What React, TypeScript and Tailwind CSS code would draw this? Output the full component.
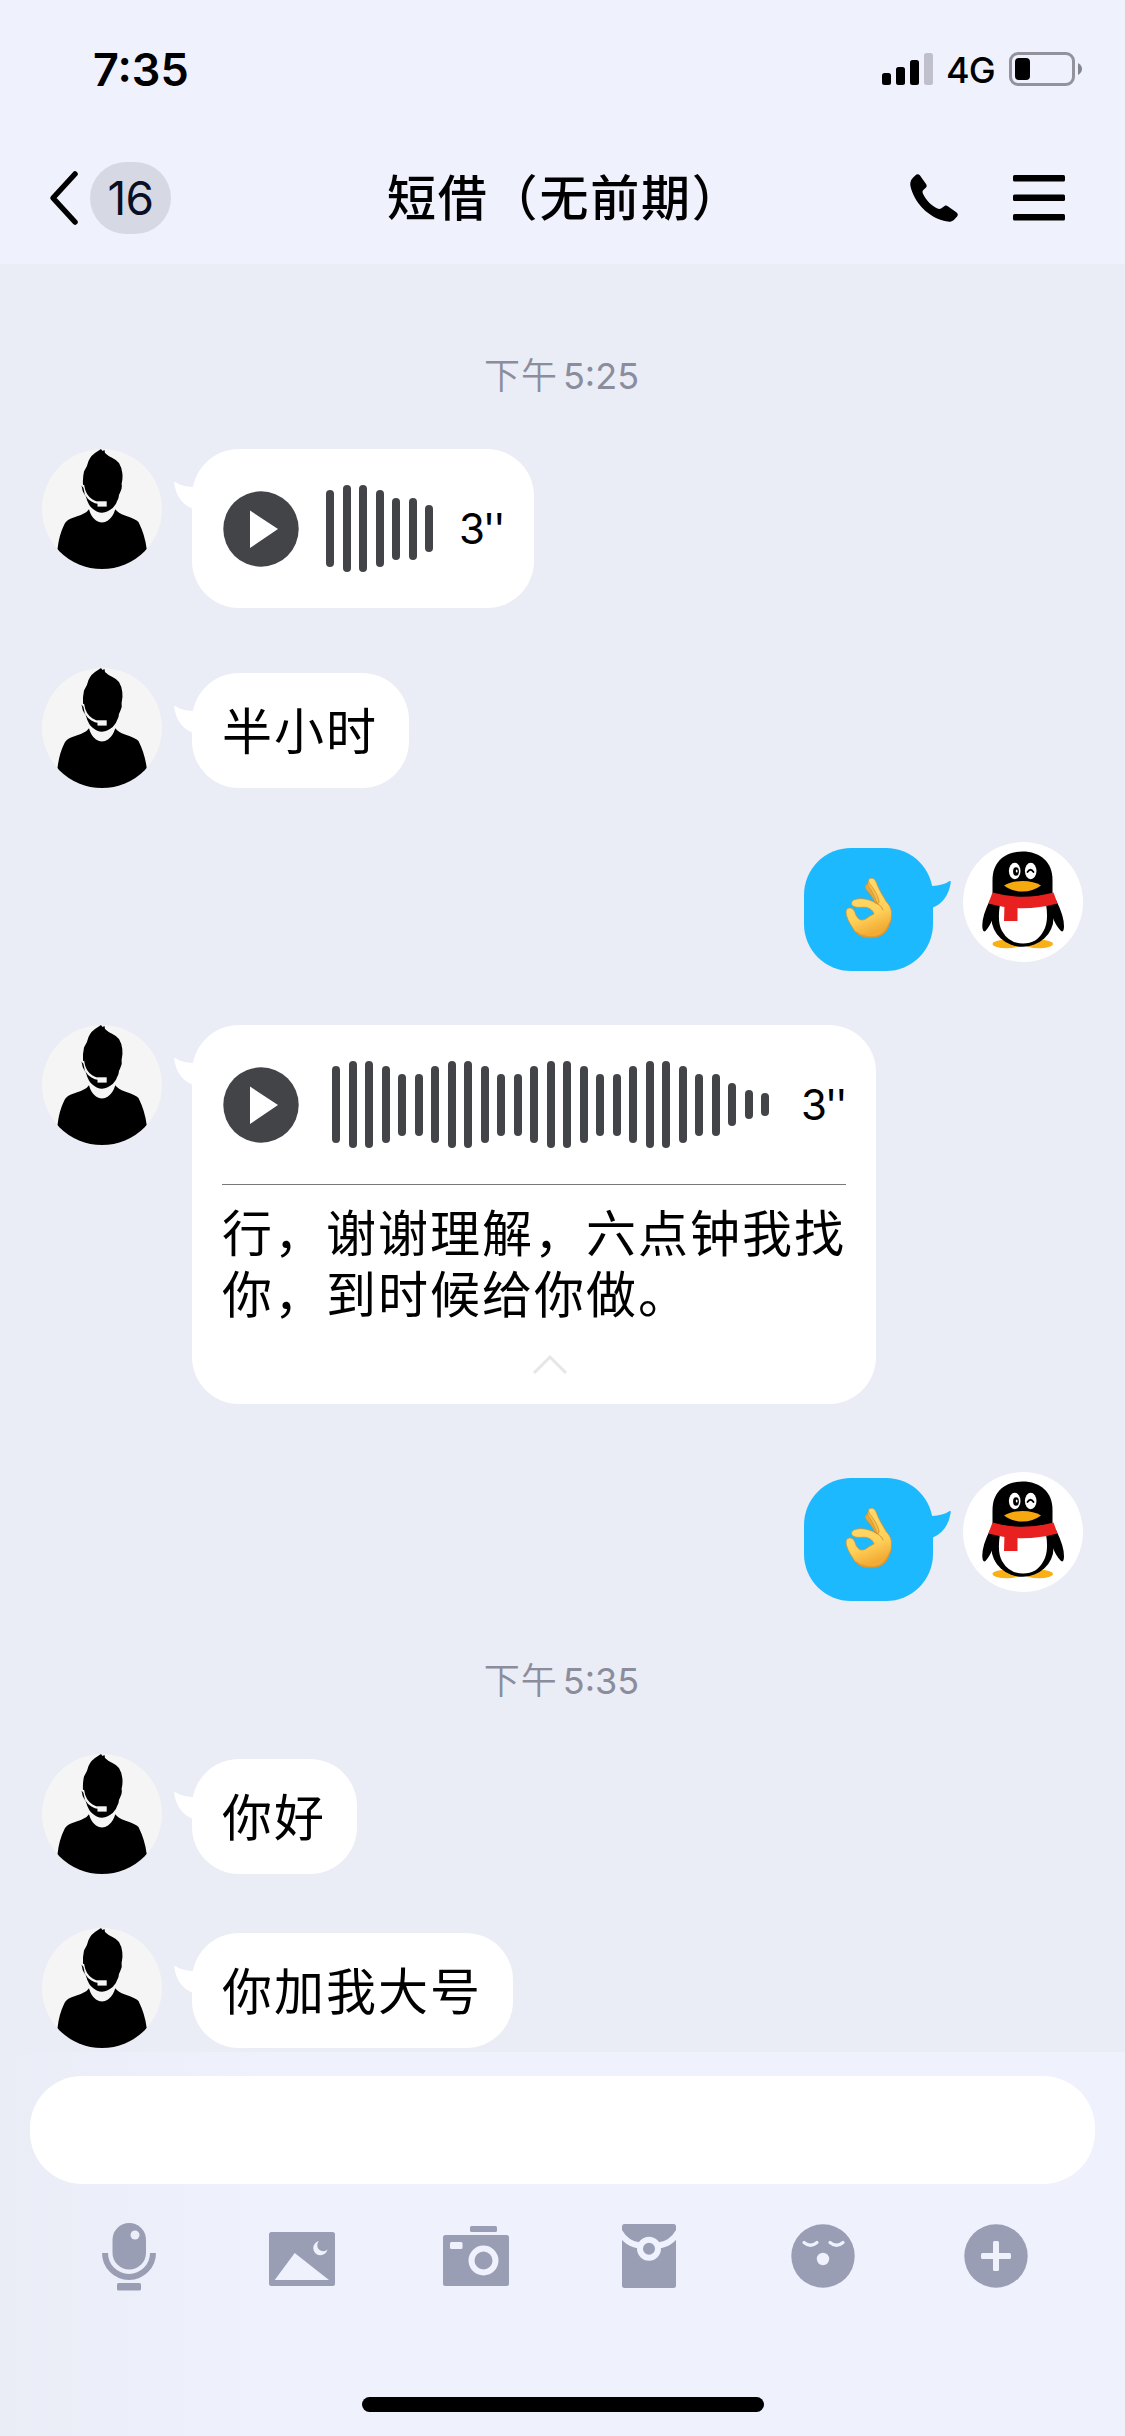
import type { ReactNode } from "react";
import clsx from "clsx";

type Message =
  | { kind: "time"; text: string; className: string }
  | { kind: "text"; text: string; className: string }
  | { kind: "ok"; className: string }
  | { kind: "voice"; bars: number[]; transcript?: string; className: string };

const WAVE = [77, 87, 87, 77, 62, 62];

const messages: Message[] = [
  { kind: "time", text: "5:25", className: "mt-[84px]" },
  { kind: "voice", bars: [...WAVE, 47], className: "mt-[47px]" },
  { kind: "text", text: "半小时", className: "mt-[60px]" },
  { kind: "ok", className: "mt-[54px]" },
  {
    kind: "voice",
    bars: [...WAVE, ...WAVE, ...WAVE, ...WAVE, 43, 29, 23],
    transcript: "行，谢谢理解，六点钟我找你，到时候给你做。",
    className: "mt-[54px]",
  },
  { kind: "ok", className: "mt-[68px]" },
  { kind: "time", text: "5:35", className: "mt-[52px]" },
  { kind: "text", text: "你好", className: "mt-[47px]" },
  { kind: "text", text: "你加我大号", className: "mt-[54px]" },
];

function StatusBar() {
  return (
    <div className="flex h-[138px] items-center justify-between pr-[42px] pl-[93px]">
      <span className="text-[45px] leading-none font-semibold">7:35</span>
      <div className="flex items-center">
        <svg width="52" height="34" viewBox="0 0 52 34">
          <rect x="0" y="21" width="9" height="12" rx="2.5" />
          <rect x="14" y="15" width="9" height="18" rx="2.5" />
          <rect x="28" y="8" width="9" height="25" rx="2.5" />
          <rect x="42" y="1" width="9" height="32" rx="2.5" fill="#bfc0cb" />
        </svg>
        <span className="ml-[12px] w-[63px] pt-[1px] text-[36px] leading-none font-medium tracking-[-1px]">4G</span>
        <svg width="74" height="34" viewBox="0 0 74 34">
          <rect x="1.5" y="1.5" width="63" height="31" rx="7.5" fill="none" stroke="#93939e" strokeWidth="3" />
          <rect x="6" y="6" width="15" height="22" rx="4" />
          <path d="M69 11q4 2.500 4 6t-4 6z" fill="#85858f" />
        </svg>
      </div>
    </div>
  );
}

function NavBar() {
  return (
    <div className="grid h-[120px] grid-cols-[1fr_auto_1fr] items-center">
      <div className="flex items-center pl-[49px]">
        <svg width="30" height="56" viewBox="0 0 30 56" fill="none" stroke="#000" strokeWidth="5.500" strokeLinecap="round" strokeLinejoin="round">
          <path d="M26 4L4 28L26 52" />
        </svg>
        <span className="ml-[11px] flex h-[72px] w-[81px] items-center justify-center rounded-full bg-[#d6d9e4] text-[46px] tracking-[-0.5px] text-[#0a0f24]">
          16
        </span>
      </div>
      <h1 className="w-[351px] pt-[1px] text-[49px] leading-none font-medium tracking-[1.8px] whitespace-nowrap">短借（无前期）</h1>
      <div className="flex items-center justify-end pr-[60px]">
        <svg width="50" height="50" viewBox="0 0 50 50">
          <path d="M6.500 2.200C8 .8 9.800 .9 11 2.500L17.200 11.300C18 12.500 17.800 13.800 16.800 14.700L14.300 17.100C13.300 18.200 13.400 19.500 14 20.700C17.300 27.500 22 32.200 28.400 35.600C29.800 36.300 31.200 36.200 32.400 35.300L35.600 33.100C36.700 32.400 37.800 32.500 38.800 33.200L47.300 39.200C49 40.500 49.200 42 48.100 43.500L44.800 47C43 48.600 40.800 49 38.300 48.600C19.500 45.500 4.500 29 1.300 12.300C.8 8.500 2.500 5.500 6.500 2.200Z" />
        </svg>
        <svg className="ml-[54px]" width="52" height="48" viewBox="0 0 52 48">
          <rect x="0" y="1" width="52" height="6.500" rx="1.500" />
          <rect x="0" y="20.500" width="52" height="6.500" rx="1.500" />
          <rect x="0" y="40" width="52" height="6.500" rx="1.500" />
        </svg>
      </div>
    </div>
  );
}

function ManAvatar() {
  return (
    <svg className="shrink-0 rounded-full" width="120" height="120" viewBox="0 0 120 120">
      <rect width="120" height="120" fill="#f5f5f5" />
      <path d="M59 0L56 2Q49 6 46.500 12Q45.500 17 42 22.500Q40.500 29 41 36Q42 43 44 48Q46.500 57 51 60Q55 63.500 60 63.700Q66 63 70.700 59Q74.500 55 76.500 49Q77 45 78.300 43Q80.500 39 79.600 35Q81 29 80.300 24Q79.500 18 77 14Q74 10.500 70 8.700Q66 7 63 4L62.500 1L60.500 2Z" />
      <path d="M41 36Q42.500 47 50 51.500Q53 53.500 57 54" fill="none" stroke="#f5f5f5" strokeWidth="2.200" />
      <path d="M39.500 36.500Q40 42 43 46.500L41.500 39Z" />
      <rect x="55.500" y="52.300" width="9.200" height="5.300" fill="#f5f5f5" />
      <path d="M47 60.300Q49 68 54 71.500Q60 75.500 66 71.500Q71 68 73.300 60.300Q76 64 83 66.500Q94 70 96.500 73Q103 86 104.700 100L104 120H16L15.500 100Q17 86 22.500 75Q24.500 71 29 69.500Q41 65.500 44.500 63Z" />
    </svg>
  );
}

function PenguinAvatar() {
  return (
    <svg className="shrink-0 rounded-full" width="120" height="120" viewBox="0 0 120 120">
      <rect width="120" height="120" fill="#fff" />
      <ellipse cx="43.500" cy="102" rx="14" ry="4.200" fill="#f9b016" />
      <ellipse cx="76" cy="102" rx="14" ry="4.200" fill="#f9b016" />
      <path d="M27 58Q19 74 19.300 84Q19.500 91 22.500 89Q27 84 30 76L36 62ZM93 58Q101 74 101 84Q101 91 98 89Q93 84 90 76L84 62Z" />
      <ellipse cx="59.500" cy="76" rx="31" ry="28.800" />
      <path d="M29.500 54V38C29.500 20 42 9.600 59.500 9.600S89.500 20 89.500 38V54Z" />
      <path d="M37 62Q34 80 39 89Q46 101.500 60 101.500T80.500 89Q86 80 83 62Z" fill="#fff" />
      <ellipse cx="51.700" cy="29" rx="5.800" ry="8.300" fill="#fff" />
      <ellipse cx="67.700" cy="29" rx="5.800" ry="8.300" fill="#fff" />
      <ellipse cx="53" cy="29.500" rx="2.900" ry="4.200" />
      <ellipse cx="53.700" cy="29" rx="0.900" ry="1.600" fill="#fff" />
      <path d="M64.500 30Q67.500 25.500 70.500 30" fill="none" stroke="#000" strokeWidth="1.800" strokeLinecap="round" />
      <path d="M41 43.500Q48 39 59.500 39T78 43.500Q70 49.500 59.500 49.500T41 43.500Z" fill="#f6a90f" />
      <path d="M29.500 50.500Q59 59 90.500 50.500L94.500 61.500Q59 71 25.300 61.500Z" fill="#e92020" />
      <path d="M41.500 62H54.500V79H41Z" fill="#e92020" />
    </svg>
  );
}

// OK hand, drawn as back fingers + palm with the index/thumb ring
function OkHand() {
  return (
    <svg width="46" height="60" viewBox="0 0 46 60" className="mb-[3px] overflow-visible">
      <defs>
        <linearGradient id="hand" x1="0" y1="0" x2="0.300" y2="1">
          <stop offset="0" stopColor="#ffdc72" />
          <stop offset="0.700" stopColor="#ffd15a" />
          <stop offset="1" stopColor="#f2ac35" />
        </linearGradient>
      </defs>
      <g stroke="#d5922d" strokeWidth="0.800" strokeLinejoin="round">
        <path d="M20 7C18.600 8.500 19.500 11 21.500 13C26 17.500 27.500 22 31 27L33 20L24 7.500C22.500 5.500 21 6 20 7Z" fill="#e9a93a" />
        <path d="M22.500 3.500C21 5 22 8 24 10.500C28 16 29 21 32 27L35 17L27 5C25.500 2.500 23.500 2.500 22.500 3.500Z" fill="#f5bf4b" />
        <path
          d="M23.500 .8C26.500-.8 29 1 30.500 5C33 12 37 18 40.500 24C44.500 28 46 33 45.500 37C45.500 43 43.500 47 41.500 51C38 57.500 31 60 24 59.700C16 59.700 11 56.500 8 52C5 47 2 43 .5 37.500C-.5 33.500 .3 30.500 3 30C6 29.500 7.800 31.500 9 34.500C10.500 39.500 13 42 16 42C20 42 22 38.500 28 36C27 31.500 22 29 17.500 29.200C13 29.500 10 29.500 7.500 28.200C4.500 26.500 5 23 8.500 21.700C15 19.500 22 21 29 24.500C31.500 26 33 26 33 23C31.500 16 27 10 23.500 5.500C22 3 22.500 1.500 23.500 .8Z"
          fill="url(#hand)"
        />
      </g>
      <path d="M29 24.500C34 27 36 29 37 32" fill="none" stroke="#c98a2b" strokeWidth="0.900" strokeLinecap="round" />
      <path d="M10 54Q22 62 34 57Q41 53 44 44" fill="none" stroke="#d08a1e" strokeWidth="1.200" opacity="0.500" />
    </svg>
  );
}

function Bubble({ mine, className, children }: { mine?: boolean; className?: string; children: ReactNode }) {
  return (
    <div className={clsx("relative rounded-[47px]", mine ? "bg-[#1cb9ff]" : "bg-white", className)}>
      {children}
      {/* Speech tail */}
      <svg
        className={clsx("absolute top-[32px]", mine ? "-right-[18px] -scale-x-100 text-[#1cb9ff]" : "-left-[18px] text-white")}
        width="24"
        height="30"
        viewBox="0 0 24 30"
        fill="currentColor"
      >
        <path d="M.2 2.200Q0 .3 1.800 1.200Q8 5.500 19 6H24V28L18 27.500Q3 21 .2 2.200Z" />
      </svg>
    </div>
  );
}

function VoiceRow({ bars, long }: { bars: number[]; long: boolean }) {
  return (
    <div className="flex h-[159px] items-center">
      <svg className="ml-[1px] shrink-0" width="76" height="76" viewBox="0 0 76 76">
        <circle cx="38" cy="38" r="37.700" fill="#434448" />
        <path d="M27 19.500L55 38L27 57Z" fill="#fff" />
      </svg>
      <div className={clsx("flex shrink-0 items-center gap-[8.5px]", long ? "ml-[33px]" : "ml-[27px]")}>
        {bars.map((h, i) => (
          <span key={i} className="w-[8px] rounded-full bg-[#434448]" style={{ height: h }} />
        ))}
      </div>
      <span className={clsx("shrink-0 text-[42px] leading-none tracking-[-2.3px]", long ? "ml-[32px]" : "ml-[26px]")}>3''</span>
    </div>
  );
}

function MessageRow({ message }: { message: Message }) {
  if (message.kind === "time") {
    return (
      <p className={clsx("flex h-[54px] items-center justify-center gap-[5px] pr-[2px] text-[36px] text-[#8b8d9c]", message.className)}>
        <span className="pt-[1px] font-[350] tracking-[1px]">下午</span>
        <span className="pt-[1px]">{message.text}</span>
      </p>
    );
  }

  if (message.kind === "ok") {
    return (
      <div className={clsx("flex items-start justify-end gap-[30px] pr-[42px]", message.className)}>
        <Bubble mine className="mt-[6px] flex h-[123px] w-[129px] items-center justify-center">
          <OkHand />
        </Bubble>
        <PenguinAvatar />
      </div>
    );
  }

  return (
    <div className={clsx("flex items-start gap-[30px] pl-[42px]", message.className)}>
      <ManAvatar />
      {message.kind === "text" ? (
        <Bubble className="mt-[5px] flex h-[115px] items-center pt-[3px] pr-[31px] pl-[30px] text-[50px] leading-none tracking-[2px]">
          <span>{message.text}</span>
        </Bubble>
      ) : (
        <Bubble className={clsx("px-[30px]", message.transcript ? "h-[379px] w-[684px]" : "w-[342px]")}>
          <VoiceRow bars={message.bars} long={!!message.transcript} />
          {message.transcript && (
            <>
              <div className="h-px bg-[#777]" />
              <p className="mt-[19px] w-[632px] text-[50px] leading-[61px] tracking-[2px]">{message.transcript}</p>
              <svg className="mt-[28px] ml-[310px]" width="36" height="22" viewBox="0 0 36 22" fill="none" stroke="#e6e6e6" strokeWidth="3">
                <path d="M2 19L18 3L34 19" />
              </svg>
            </>
          )}
        </Bubble>
      )}
    </div>
  );
}

const CUT = "#eff1fc";

const tools: { name: string; icon: ReactNode }[] = [
  {
    name: "voice",
    icon: (
      <>
        <rect x="18.500" y="1" width="33.500" height="46.500" rx="16.700" />
        <circle cx="41" cy="13" r="4.500" fill="#ebedf7" />
        <path d="M11 31A24 24 0 0 0 59 31" fill="none" stroke="#999eb5" strokeWidth="6" />
        <rect x="23" y="61" width="24" height="7.500" rx="1.500" />
      </>
    ),
  },
  {
    name: "photo",
    icon: (
      <>
        <rect x="2" y="10" width="66" height="54" rx="2.500" />
        <path d="M27.700 31L62 58H7.700Z" fill={CUT} />
        <path d="M52 19A7.200 7.200 0 1 0 60.500 27.500A6 6 0 0 1 52 19Z" fill={CUT} />
      </>
    ),
  },
  {
    name: "camera",
    icon: (
      <>
        <rect x="29" y="4" width="27" height="6" rx="1.500" />
        <rect x="2" y="13" width="66" height="51" rx="2.500" />
        <rect x="9" y="20" width="12.500" height="7" rx="1.500" fill={CUT} />
        <circle cx="42.500" cy="38.500" r="12" fill="none" stroke={CUT} strokeWidth="6" />
      </>
    ),
  },
  {
    name: "red packet",
    icon: (
      <>
        <rect x="8" y="2" width="54" height="64" rx="2.500" />
        <path d="M5 9Q13 22.500 26 23.500M65 9Q57 22.500 44 23.500" fill="none" stroke={CUT} strokeWidth="6" />
        <circle cx="35" cy="26.700" r="9" fill="none" stroke={CUT} strokeWidth="6" />
      </>
    ),
  },
  {
    name: "emoji",
    icon: (
      <>
        <circle cx="35" cy="34" r="31.700" />
        <path d="M16 20.500Q22.500 26 29 20.500M42 20.500Q48.500 26 55 20.500" fill="none" stroke={CUT} strokeWidth="3.200" strokeLinecap="round" />
        <circle cx="35" cy="37" r="6.200" fill={CUT} />
      </>
    ),
  },
  {
    name: "more",
    icon: (
      <>
        <circle cx="35" cy="34" r="31.700" />
        <rect x="20" y="31" width="30" height="6" rx="1.500" fill={CUT} />
        <rect x="32" y="19" width="6" height="30" rx="1.500" fill={CUT} />
      </>
    ),
  },
];

export default function App() {
  return (
    <div className="flex h-[2436px] w-[1125px] flex-col overflow-hidden bg-[#eaecf6] font-['Inter','Noto_Sans_CJK_SC',sans-serif] text-black">
      <header className="h-[264px] shrink-0 bg-[#eff1fd]">
        <StatusBar />
        <NavBar />
      </header>

      <main className="h-[1788px] shrink-0">
        {messages.map((message, i) => (
          <MessageRow key={i} message={message} />
        ))}
      </main>

      <footer className="flex flex-1 flex-col bg-[#eff1fc] bg-linear-to-r from-[#eaedf6] to-[#eff1fd] to-25% pt-[24px]">
        <div className="mx-[30px] h-[108px] rounded-[52px] bg-white" />
        <div className="mt-[38px] grid grid-cols-6 px-[42px]">
          {tools.map((tool) => (
            <button key={tool.name} aria-label={tool.name} className="flex justify-center">
              <svg width="70" height="70" viewBox="0 0 70 70" fill="#999eb5">
                {tool.icon}
              </svg>
            </button>
          ))}
        </div>
        <div className="mx-auto mt-[105px] h-[15px] w-[402px] rounded-full bg-black" />
      </footer>
    </div>
  );
}
